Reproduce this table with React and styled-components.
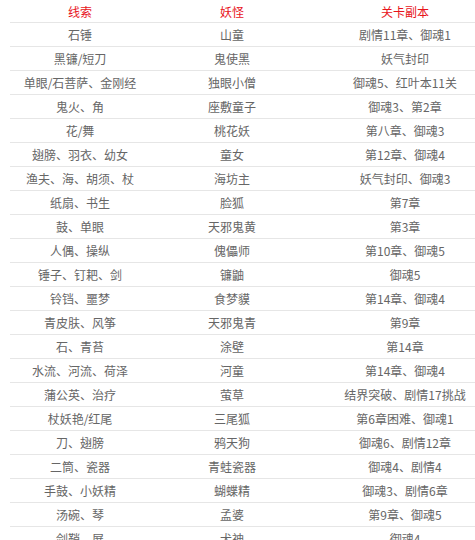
import React from "react";
import styled, { createGlobalStyle } from "styled-components";

const GlobalStyle = createGlobalStyle`
  html, body {
    margin: 0;
    padding: 0;
    background: #fff;
    overflow: hidden;
  }
  body {
    font-family: "Noto Sans CJK SC", "Noto Sans", sans-serif;
  }
`;

const Page = styled.div`
  width: 475px;
  height: 540px;
  overflow: hidden;
  padding-left: 10px;
  box-sizing: border-box;
`;

const Table = styled.table`
  width: 486px;
  border-collapse: collapse;
  table-layout: fixed;
  font-size: 12px;
  color: #666;
`;

const Head = styled.th`
  height: 22px;
  padding: 0;
  font-weight: normal;
  color: #e8131b;
  text-align: center;
  border-bottom: 1px solid #e6e6e6;
  width: ${(p) => p.$w}px;
`;

const Cell = styled.td`
  height: 23px;
  padding: 0;
  text-align: center;
  border-bottom: 1px solid #e6e6e6;
  white-space: nowrap;
`;

const rows = [
  ["石锤", "山童", "剧情11章、御魂1"],
  ["黑镰/短刀", "鬼使黑", "妖气封印"],
  ["单眼/石菩萨、金刚经", "独眼小僧", "御魂5、红叶本11关"],
  ["鬼火、角", "座敷童子", "御魂3、第2章"],
  ["花/舞", "桃花妖", "第八章、御魂3"],
  ["翅膀、羽衣、幼女", "童女", "第12章、御魂4"],
  ["渔夫、海、胡须、杖", "海坊主", "妖气封印、御魂3"],
  ["纸扇、书生", "脸狐", "第7章"],
  ["鼓、单眼", "天邪鬼黄", "第3章"],
  ["人偶、操纵", "傀儡师", "第10章、御魂5"],
  ["锤子、钉耙、剑", "镰鼬", "御魂5"],
  ["铃铛、噩梦", "食梦貘", "第14章、御魂4"],
  ["青皮肤、风筝", "天邪鬼青", "第9章"],
  ["石、青苔", "涂壁", "第14章"],
  ["水流、河流、荷泽", "河童", "第14章、御魂4"],
  ["蒲公英、治疗", "萤草", "结界突破、剧情17挑战"],
  ["杖妖艳/红尾", "三尾狐", "第6章困难、御魂1"],
  ["刀、翅膀", "鸦天狗", "御魂6、剧情12章"],
  ["二筒、瓷器", "青蛙瓷器", "御魂4、剧情4"],
  ["手鼓、小妖精", "蝴蝶精", "御魂3、剧情6章"],
  ["汤碗、琴", "孟婆", "第9章、御魂5"],
  ["剑鞘、屏", "犬神", "御魂4"],
];

export default function App() {
  return (
    <>
      <GlobalStyle />
      <Page>
        <Table>
          <thead>
            <tr>
              <Head $w={140}>线索</Head>
              <Head $w={164}>妖怪</Head>
              <Head $w={182}>关卡副本</Head>
            </tr>
          </thead>
          <tbody>
            {rows.map((r, i) => (
              <tr key={i}>
                {r.map((c, j) => (
                  <Cell key={j}>{c}</Cell>
                ))}
              </tr>
            ))}
          </tbody>
        </Table>
      </Page>
    </>
  );
}
